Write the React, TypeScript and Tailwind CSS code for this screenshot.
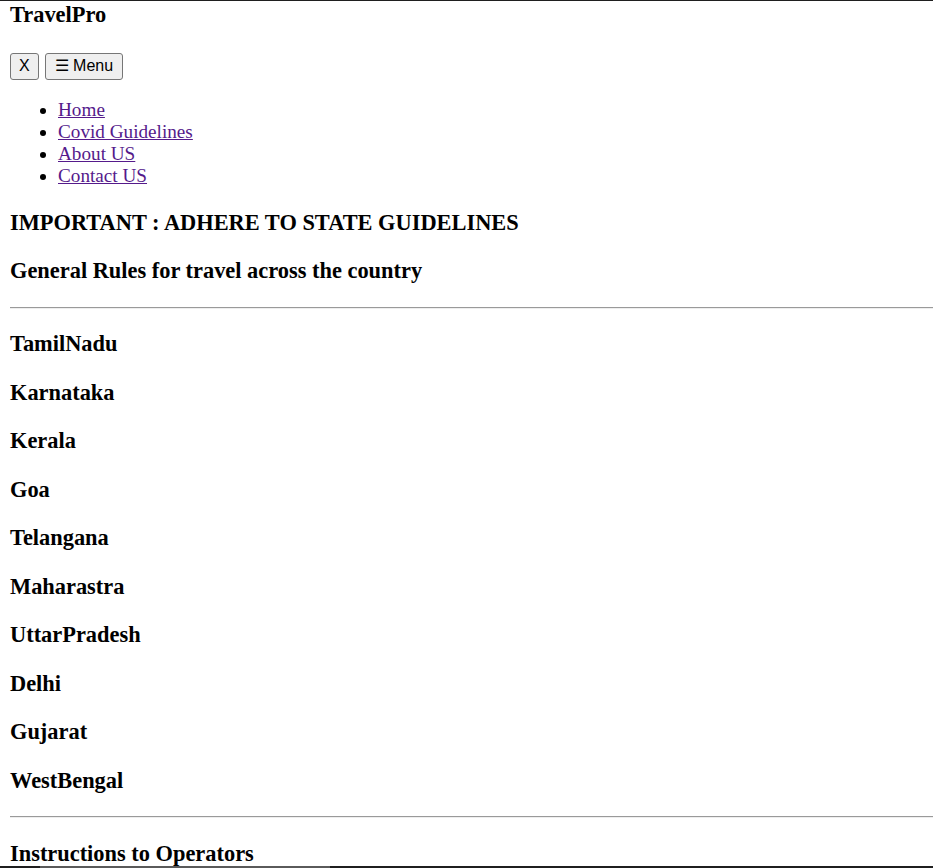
const states = [
  "TamilNadu",
  "Karnataka",
  "Kerala",
  "Goa",
  "Telangana",
  "Maharastra",
  "UttarPradesh",
  "Delhi",
  "Gujarat",
  "WestBengal",
]

const links = ["Home", "Covid Guidelines", "About US", "Contact US"]

const Heading = ({ children, className = "my-[22.5px]" }: { children: React.ReactNode; className?: string }) => (
  <h3 className={`text-[22.4px] font-bold leading-[26px] ${className}`}>{children}</h3>
)

const Divider = () => <hr className="ml-[10px] border-0 border-t border-t-[#9a9a9a] border-b border-b-[#eeeeee]" />

const App = () => {
  return (
    <div className="min-h-[868px] border-t border-[#1f1f1f] bg-white text-black font-['Liberation_Serif','Times_New_Roman',serif] text-[19.2px] leading-[22px] overflow-hidden">
      <header className="px-[10px] pt-[1px]">
        <Heading className="mt-0 mb-[22.5px]">TravelPro</Heading>
        <div className="flex gap-[6px] pt-[2px]">
          <button className="h-[27px] px-[8px] bg-[#efefef] border border-[#767676] rounded-[3px] font-['Liberation_Sans',Arial,sans-serif] text-[16px] leading-none">
            X
          </button>
          <button className="h-[27px] px-[9px] bg-[#efefef] border border-[#767676] rounded-[3px] font-['Liberation_Sans',Arial,sans-serif] text-[16px] leading-none">
            ☰ Menu
          </button>
        </div>
        <ul className="list-disc pl-[48px] my-[19.2px]">
          {links.map((l) => (
            <li key={l}>
              <a href="#" className="text-[#551a8b] underline">
                {l}
              </a>
            </li>
          ))}
        </ul>
      </header>

      <section className="px-[10px]">
        <Heading className="mt-[23.2px] mb-[22.5px]">IMPORTANT : ADHERE TO STATE GUIDELINES</Heading>
        <Heading>General Rules for travel across the country</Heading>
      </section>

      <Divider />

      <section className="px-[10px]">
        {states.map((s) => (
          <Heading key={s}>{s}</Heading>
        ))}
      </section>

      <Divider />

      <section className="px-[10px]">
        <Heading>Instructions to Operators</Heading>
      </section>

      {/* window frame / scrollbar strip at the bottom */}
      <div className="fixed bottom-0 left-0 right-0 h-[2px] bg-[#1f1f1f] flex">
        <div className="ml-[40px] w-[290px] bg-[#5a5a5a]" />
      </div>
    </div>
  )
}

export default App
